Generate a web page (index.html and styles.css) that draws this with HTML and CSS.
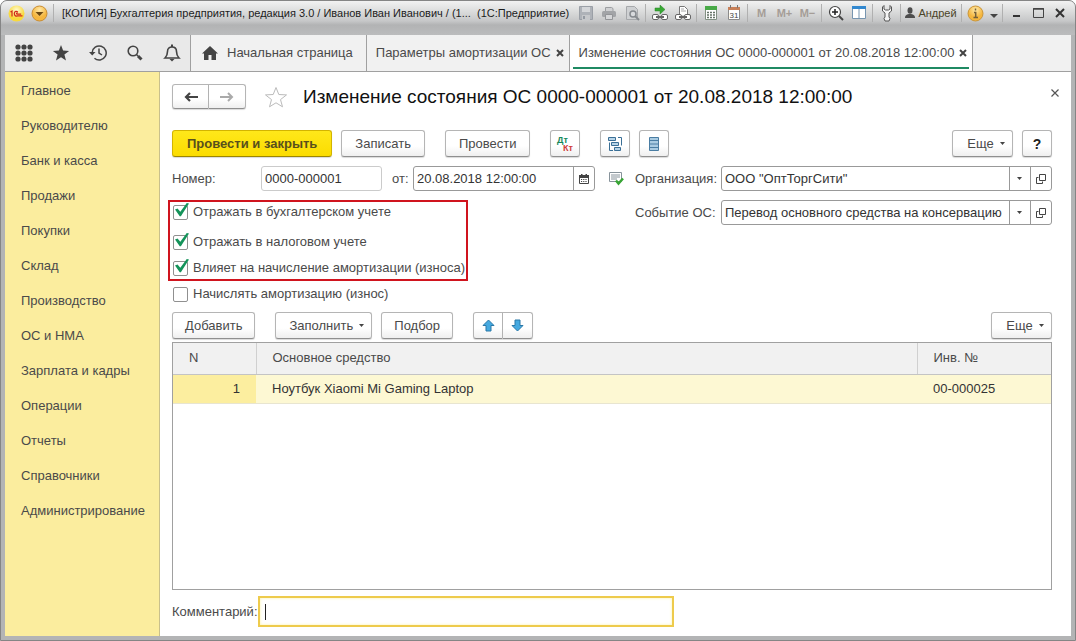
FILE: index.html
```html
<!DOCTYPE html>
<html lang="ru">
<head>
  <meta charset="UTF-8" />
  <meta name="viewport" content="width=device-width, initial-scale=1.0"/>
  <title>Изменение состояния ОС</title>
  <link rel="stylesheet" href="styles.css">
</head>
<body>
<div class="window">

  <!-- Title bar -->
  <header class="titlebar">
    <button class="tool" aria-label="Меню программы">
      <svg width="17" height="17" viewBox="0 0 17 17"><defs><radialGradient id="gold" cx="50%" cy="30%"><stop offset="0" stop-color="#fffbd0"/><stop offset="1" stop-color="#f8d93c"/></radialGradient><radialGradient id="amber" cx="50%" cy="25%"><stop offset="0" stop-color="#ffe9a8"/><stop offset="1" stop-color="#f5b63e"/></radialGradient></defs><circle cx="8.500" cy="8.500" r="8" fill="url(#gold)"/><path d="M2.500 7l1.500-1v5.500M9.800 7.200C9 5.800 6.300 6 6.300 8.600s1.900 2.700 3.200 2.300H14.500M9.500 8.300c-1-.6-1.500.8-.3.900h4" fill="none" stroke="#d22819" stroke-width="1.200"/></svg>
    </button>
    <button class="tool" aria-label="Главное меню">
      <svg width="17" height="17" viewBox="0 0 17 17"><circle cx="8.500" cy="8.500" r="7.500" fill="url(#amber)" stroke="#c98d35"/><path d="M4.500 7h8l-4 4z" fill="#6b4712"/></svg>
    </button>
    <span class="sep"></span>
    <span class="caption">[КОПИЯ] Бухгалтерия предприятия, редакция 3.0 / Иванов Иван Иванович / (1...&nbsp; (1С:Предприятие)</span>

    <button class="tool" aria-label="Сохранить">
      <svg width="16" height="16" viewBox="0 0 16 16"><path d="M1.500 1.500h13v13h-13z" fill="#aeb2b8" stroke="#9a9fa6"/><path d="M4 2h8v5H4z" fill="#d4d6d9"/><path d="M4 10h8v5H4z" fill="#c6c8cb"/><path d="M5 11h2v3H5z" fill="#949aa2"/></svg>
    </button>
    <button class="tool" aria-label="Печать">
      <svg width="16" height="16" viewBox="0 0 16 16"><path d="M4.500 6V2.500h6l1.500 1V6" fill="#d0d1d3" stroke="#9c9ea1"/><rect x="1" y="6" width="14" height="6" rx="1.500" fill="#a2a4a7"/><path d="M4.500 9.500h7v5h-7z" fill="#d5d6d8" stroke="#929497"/></svg>
    </button>
    <button class="tool" aria-label="Предварительный просмотр">
      <svg width="16" height="16" viewBox="0 0 16 16"><path d="M2.500 1.500h8l3 3v10h-11z" fill="#cfd1d3" stroke="#a6a8ab"/><circle cx="9" cy="9" r="3" fill="#d8dadd" stroke="#85898e" stroke-width="1.500"/><path d="M11 11l4 4" stroke="#85898e" stroke-width="2"/></svg>
    </button>
    <span class="sep"></span>
    <button class="tool" aria-label="Перейти по ссылке">
      <svg width="16" height="16" viewBox="0 0 16 16"><path d="M3 3h5V0l5 4.500L8 9V6H3z" fill="#39a935" stroke="#278426" stroke-width=".5"/><g fill="#fff" stroke="#666"><rect x=".5" y="9.500" width="6" height="5" rx="1.500"/><rect x="9.500" y="9.500" width="6" height="5" rx="1.500"/></g><path d="M4 12h8" stroke="#666" stroke-width="2"/></svg>
    </button>
    <button class="tool" aria-label="Получить ссылку">
      <svg width="16" height="16" viewBox="0 0 16 16"><path d="M4.500 10V1.500h5l3 3V10" fill="#fff" stroke="#777"/><path d="M6 4h3M6 6h5" stroke="#aaa"/><g fill="#fff" stroke="#666"><rect x=".5" y="9.500" width="6" height="5" rx="1.500"/><rect x="9.500" y="9.500" width="6" height="5" rx="1.500"/></g><path d="M4 12h8" stroke="#666" stroke-width="2"/></svg>
    </button>
    <span class="sep"></span>
    <button class="tool" aria-label="Калькулятор">
      <svg width="16" height="16" viewBox="0 0 16 16"><path d="M2.500 1.500h11v13h-11z" fill="#fff" stroke="#829183"/><path d="M2 1h12v4H2z" fill="#48a947"/><path d="M4 7.500h8M4 10h8M4 12.500h8" stroke="#667467" stroke-width="1.500" stroke-dasharray="2 1"/></svg>
    </button>
    <button class="tool" aria-label="Календарь">
      <svg width="16" height="16" viewBox="0 0 16 16"><path d="M2.500 2.500h11v12h-11z" fill="#fff" stroke="#8b8b8b"/><path d="M2 2h12v3H2z" fill="#c88059"/><path d="M4.500 0v3M11.500 0v3" stroke="#777"/><text x="8" y="13" class="day">31</text></svg>
    </button>
    <span class="sep"></span>
    <button class="tool memory">M</button>
    <button class="tool memory">M+</button>
    <button class="tool memory">M−</button>
    <span class="sep"></span>
    <button class="tool" aria-label="Масштаб">
      <svg width="16" height="16" viewBox="0 0 16 16"><circle cx="7" cy="7" r="5.500" fill="#fff" stroke="#444" stroke-width="1.200"/><path d="M4 7h6M7 4v6" stroke="#222" stroke-width="1.500"/><path d="M11 11l4 4" stroke="#444" stroke-width="2"/></svg>
    </button>
    <button class="tool" aria-label="Панели">
      <svg width="16" height="16" viewBox="0 0 16 16"><path d="M1.500 1.500h13v12h-13z" fill="#fff" stroke="#7795b0"/><path d="M1 1h14v3H1z" fill="#3288cf"/><path d="M8 4v10" stroke="#7795b0"/></svg>
    </button>
    <span class="sep"></span>
    <button class="tool" aria-label="Сервис">
      <svg width="16" height="18" viewBox="0 0 16 18"><path d="M5 1.500L3.500 3v4L6 9v4l-1 1.500L6 17h4l1-2.500-1-1.500V9l2.500-2V3L11 1.500V5L9.500 6h-3L5 5z" fill="#f4f4f4" stroke="#555"/></svg>
    </button>
    <span class="sep"></span>
    <button class="tool user">
      <svg width="10" height="12" viewBox="0 0 10 12"><ellipse cx="5" cy="3.500" rx="2.500" ry="3.200" fill="#4d4d4d"/><path d="M0 11c0-3 2-4 5-4s5 1 5 4z" fill="#4d4d4d"/></svg>
      Андрей
    </button>
    <span class="sep"></span>
    <button class="tool" aria-label="Справка">
      <svg width="17" height="17" viewBox="0 0 17 17"><circle cx="8.500" cy="8.500" r="7.500" fill="url(#amber)" stroke="#c9963b"/><path d="M8.500 3.500v2M7 7.500h1.700v4.700M6.500 12.500h4.500" stroke="#75603a" stroke-width="1.500" fill="none"/></svg>
    </button>
    <button class="tool narrow" aria-label="Ещё команды">
      <svg width="8" height="12" viewBox="0 0 8 12"><path d="M0 7h8l-4 4z" fill="#444"/></svg>
    </button>
    <span class="sep"></span>
    <button class="tool win" aria-label="Свернуть">
      <svg width="12" height="12" viewBox="0 0 12 12"><path d="M3 9h7" stroke="#333" stroke-width="2"/></svg>
    </button>
    <button class="tool win" aria-label="Развернуть">
      <svg width="12" height="12" viewBox="0 0 12 12"><path d="M1.500 1.500h10v9h-10z" fill="none" stroke="#444"/><path d="M1 2h11" stroke="#444" stroke-width="1.500"/></svg>
    </button>
    <button class="tool win" aria-label="Закрыть окно">
      <svg width="12" height="12" viewBox="0 0 12 12"><path d="M2 2l8 8M10 2l-8 8" stroke="#333" stroke-width="2"/></svg>
    </button>
  </header>

  <!-- Tools and open tabs -->
  <nav class="tabbar">
    <button class="panel-btn" aria-label="Разделы">
      <svg width="18" height="18" viewBox="0 0 18 18" fill="#444"><circle cx="3" cy="3" r="2.600"/><circle cx="9" cy="3" r="2.600"/><circle cx="15" cy="3" r="2.600"/><circle cx="3" cy="9" r="2.600"/><circle cx="9" cy="9" r="2.600"/><circle cx="15" cy="9" r="2.600"/><circle cx="3" cy="15" r="2.600"/><circle cx="9" cy="15" r="2.600"/><circle cx="15" cy="15" r="2.600"/></svg>
    </button>
    <button class="panel-btn" aria-label="Избранное">
      <svg width="18" height="18" viewBox="0 0 18 18"><path d="M9 1l2.100 5.600 6 .3-4.700 3.700 1.600 5.900L9 13.200l-5 3.300 1.600-5.900L.9 6.900l6-.3z" fill="#444"/></svg>
    </button>
    <button class="panel-btn" aria-label="История">
      <svg width="18" height="18" viewBox="0 0 18 18" fill="none" stroke="#444" stroke-width="1.500"><path d="M3.200 8.500A7 7 0 1 1 5.500 14.200"/><path d="M10 4.500V9l3 2"/><path d="M0 8h6.500L3.200 11.500z" fill="#444" stroke="none"/></svg>
    </button>
    <button class="panel-btn" aria-label="Поиск">
      <svg width="18" height="18" viewBox="0 0 18 18" fill="none" stroke="#444"><circle cx="7" cy="7" r="4.800" stroke-width="1.600"/><path d="M10.500 10.500l1.500 1.500" stroke-width="1.500"/><path d="M12 12l3.500 3.500" stroke-width="3"/></svg>
    </button>
    <button class="panel-btn" aria-label="Оповещения">
      <svg width="18" height="18" viewBox="0 0 18 18"><path d="M9 .5V3" stroke="#444" stroke-width="2"/><path d="M2 14c2-2 2.500-3 2.500-6.500C4.500 4.500 6.500 3 9 3s4.500 1.500 4.500 4.500C13.500 11 14 12 16 14z" fill="none" stroke="#444" stroke-width="1.600"/><path d="M6.500 15h5L9 17.500z" fill="#444"/></svg>
    </button>
    <a class="tab home" href="#">
      <svg width="16" height="14" viewBox="0 0 16 14"><path d="M8 0l8 7.500h-2V14h-4.500V9h-3v5H2V7.500H0z" fill="#444"/></svg>
      Начальная страница
    </a>
    <div class="tab">
      <a href="#">Параметры амортизации ОС</a>
      <button class="tab-close" aria-label="Закрыть вкладку"><svg width="8" height="8" viewBox="0 0 8 8"><path d="M1 1l6 6M7 1L1 7" stroke="#444" stroke-width="2"/></svg></button>
    </div>
    <div class="tab active">
      <a href="#">Изменение состояния ОС 0000-000001 от 20.08.2018 12:00:00</a>
      <button class="tab-close" aria-label="Закрыть вкладку"><svg width="8" height="8" viewBox="0 0 8 8"><path d="M1 1l6 6M7 1L1 7" stroke="#444" stroke-width="2"/></svg></button>
    </div>
  </nav>

  <div class="workspace">
    <nav class="sections">
      <a href="#">Главное</a>
      <a href="#">Руководителю</a>
      <a href="#">Банк и касса</a>
      <a href="#">Продажи</a>
      <a href="#">Покупки</a>
      <a href="#">Склад</a>
      <a href="#">Производство</a>
      <a href="#">ОС и НМА</a>
      <a href="#">Зарплата и кадры</a>
      <a href="#">Операции</a>
      <a href="#">Отчеты</a>
      <a href="#">Справочники</a>
      <a href="#">Администрирование</a>
    </nav>

    <main class="document">
      <div class="heading">
        <div class="btn-pair">
          <button class="btn" aria-label="Назад"><svg width="14" height="10" viewBox="0 0 14 10"><path d="M14 5H3M6 1L2 5l4 4" fill="none" stroke="#444" stroke-width="2.200"/></svg></button>
          <button class="btn" aria-label="Вперед"><svg width="14" height="10" viewBox="0 0 14 10"><path d="M0 5h11M8 1l4 4-4 4" fill="none" stroke="#aaa" stroke-width="2"/></svg></button>
        </div>
        <button class="plain" aria-label="В избранное"><svg width="24" height="22" viewBox="0 0 24 22"><path d="M12 1.500l2.800 7 7.700.4-6 4.700 2 7.200-6.500-4-6.500 4 2-7.200-6-4.700 7.700-.4z" fill="#fff" stroke="#bbb"/></svg></button>
        <h1>Изменение состояния ОС 0000-000001 от 20.08.2018 12:00:00</h1>
        <button class="plain close" aria-label="Закрыть"><svg width="8" height="8" viewBox="0 0 8 8"><path d="M.5.5l7 7M7.500.5l-7 7" stroke="#555" stroke-width="1.200"/></svg></button>
      </div>

      <div class="commands">
        <button class="btn primary">Провести и закрыть</button>
        <button class="btn">Записать</button>
        <button class="btn group">Провести</button>
        <button class="btn icon group" aria-label="Дебет и кредит"><svg width="18" height="18" viewBox="0 0 18 18" class="dtkt"><text x="1" y="8" fill="#16885b">Дт</text><text x="7" y="16" fill="#cf3b3b">Кт</text></svg></button>
        <button class="btn icon group" aria-label="Структура подчиненности"><svg width="16" height="16" viewBox="0 0 16 16" fill="#b7d4e8" stroke="#3a6f96"><path d="M1.500 1.500h7v3h-7zM4.500 6.500h7v3h-7zM7.500 11.500h6v3h-6z"/><path d="M11 1.500h3.500v8M2.500 6.500v8H6" fill="none"/></svg></button>
        <button class="btn icon" aria-label="Реестр"><svg width="12" height="16" viewBox="0 0 12 16"><path d="M1.500 1.500h9v13h-9z" fill="#a9cbe2" stroke="#4a7da3"/><path d="M1 4.500h10M1 8h10M1 11.500h10" stroke="#4a7da3"/></svg></button>
        <button class="btn more">Еще <svg width="5" height="3" viewBox="0 0 5 3"><path d="M0 0h5L2.500 3z" fill="#444"/></svg></button>
        <button class="btn icon help">?</button>
      </div>

      <div class="form">
        <div class="form-left">
          <div class="field">
            <label class="number-label" for="number">Номер:</label>
            <input class="text number" id="number" type="text" value="0000-000001">
            <label class="date-label" for="date">от:</label>
            <div class="combo date">
              <input id="date" type="text" value="20.08.2018 12:00:00">
              <button aria-label="Выбрать дату"><svg width="10" height="10" viewBox="0 0 10 10"><path d="M.5 2h9v7.500h-9z" fill="#fff" stroke="#444"/><path d="M0 1h10v3H0zM2 0h1.500v1H2zM6.500 0H8v1H6.500z" fill="#444"/><path d="M2 5.500h6M2 7.500h6" stroke="#444" stroke-dasharray="1.200 1"/></svg></button>
            </div>
            <svg class="posted" width="16" height="15" viewBox="0 0 16 15"><path d="M1.500 1.500h12v9h-12z" fill="#fff" stroke="#87939b"/><path d="M3 4h9M3 6h9M3 8h6" stroke="#87939b"/><path d="M8 9.500l2.500 3L15 7.500" fill="none" stroke="#38a535" stroke-width="2.500"/></svg>
          </div>
          <div class="checks">
            <label class="check first"><input type="checkbox" checked>Отражать в бухгалтерском учете</label>
            <label class="check"><input type="checkbox" checked>Отражать в налоговом учете</label>
            <label class="check"><input type="checkbox" checked>Влияет на начисление амортизации (износа)</label>
          </div>
          <label class="check"><input type="checkbox">Начислять амортизацию (износ)</label>
        </div>
        <div class="form-right">
          <div class="field">
            <label class="ref-label" for="org">Организация:</label>
            <div class="combo">
              <select id="org"><option>ООО "ОптТоргСити"</option></select>
              <button aria-label="Открыть"><svg width="10" height="10" viewBox="0 0 10 10" fill="none" stroke="#444"><path d="M3.500.5h6v6h-6z"/><path d="M2.500 3.500h-2v6h6v-2"/></svg></button>
            </div>
          </div>
          <div class="field">
            <label class="ref-label" for="event">Событие ОС:</label>
            <div class="combo">
              <select id="event"><option>Перевод основного средства на консервацию</option></select>
              <button aria-label="Открыть"><svg width="10" height="10" viewBox="0 0 10 10" fill="none" stroke="#444"><path d="M3.500.5h6v6h-6z"/><path d="M2.500 3.500h-2v6h6v-2"/></svg></button>
            </div>
          </div>
        </div>
      </div>

      <div class="commands list-commands">
        <button class="btn">Добавить</button>
        <button class="btn group fill">Заполнить <svg width="5" height="3" viewBox="0 0 5 3"><path d="M0 0h5L2.500 3z" fill="#444"/></svg></button>
        <button class="btn">Подбор</button>
        <div class="btn-pair group">
          <button class="btn" aria-label="Вверх"><svg width="13" height="13" viewBox="0 0 13 13"><path d="M6.500 1l5.500 5.500H9V12H4V6.500H1z" fill="#45a9e0" stroke="#2a78a8"/></svg></button>
          <button class="btn" aria-label="Вниз"><svg width="13" height="13" viewBox="0 0 13 13"><path d="M6.500 12L1 6.500h3V1h5v5.500h3z" fill="#45a9e0" stroke="#2a78a8"/></svg></button>
        </div>
        <button class="btn more">Еще <svg width="5" height="3" viewBox="0 0 5 3"><path d="M0 0h5L2.500 3z" fill="#444"/></svg></button>
      </div>

      <div class="grid">
        <table>
          <thead>
            <tr><th class="col-n">N</th><th>Основное средство</th><th class="col-inv">Инв. №</th></tr>
          </thead>
          <tbody>
            <tr><td class="col-n current">1</td><td>Ноутбук Xiaomi Mi Gaming Laptop</td><td>00-000025</td></tr>
          </tbody>
        </table>
      </div>

      <div class="comment">
        <label for="comment">Комментарий:</label>
        <input id="comment" type="text">
      </div>
    </main>
  </div>
</div>
</body>
</html>
```
FILE: styles.css
```css
:root {
  --text: #4a4a4a;
  --line: #a0a0a0;
  --yellow: #fbed9e;
  --green: #1f8a63;
}

* {
  box-sizing: border-box;
}

body {
  margin: 0;
  font-family: "Liberation Sans", Arial, sans-serif;
  font-size: 13px;
  line-height: 16px;
  color: var(--text);
  background: #fff;
}

button,
input,
select {
  font: inherit;
  color: inherit;
  margin: 0;
}

button {
  cursor: pointer;
}

svg {
  flex: none;
  display: block;
}

a {
  color: inherit;
  text-decoration: none;
}

.window {
  min-height: 100vh;
  display: flex;
  flex-direction: column;
  padding: 0 4px 4px;
  background: #b3b4b5;
  border: 1px solid #858585;
  border-radius: 7px 7px 0 0;
}

/* Title bar */
.titlebar {
  display: flex;
  align-items: flex-start;
  height: 34px;
  margin: 0 -4px;
  padding: 0 4px;
  background: linear-gradient(#f2f2f2, #dcdddd 10px, #c6c7c8 20px, #b2b3b4 24px, #bbbcbd);
  border-radius: 6px 6px 0 0;
  font-size: 11px;
  color: #1c1c1c;
}

.tool {
  flex: none;
  width: 23px;
  height: 24px;
  padding: 0;
  border: none;
  background: none;
  display: flex;
  align-items: center;
  justify-content: center;
}

.tool.memory {
  font-weight: bold;
  color: #a59d97;
}

.tool.user {
  width: 56px;
  gap: 3px;
  color: #4b4428;
}

.tool.narrow {
  width: 13px;
}

.tool.win {
  width: 22px;
}

.day {
  font-size: 8px;
  text-anchor: middle;
  fill: #444;
}

.sep {
  flex: none;
  width: 1px;
  height: 18px;
  margin: 3px 2px;
  background: #b0b0b0;
}

.caption {
  flex: 1;
  min-width: 0;
  padding-left: 6px;
  line-height: 24px;
  white-space: nowrap;
  overflow: hidden;
}

/* Tabs */
.tabbar {
  display: flex;
  height: 37px;
  background: #f1f1f1;
  border-bottom: 1px solid var(--line);
}

.panel-btn {
  width: 37px;
  padding: 0;
  border: none;
  background: #e9e9e9;
  display: flex;
  align-items: center;
  justify-content: center;
}

.tab {
  display: flex;
  align-items: center;
  gap: 5px;
  padding: 0 5px 0 9px;
  border-right: 1px solid var(--line);
  white-space: nowrap;
}

.tab.home {
  gap: 9px;
  padding: 0 13px 0 11px;
  border-left: 1px solid var(--line);
}

.tab.active {
  background: linear-gradient(var(--green), var(--green)) center bottom 2px / calc(100% - 6px) 2px no-repeat #fff;
}

.tab-close {
  padding: 0;
  border: none;
  background: none;
}

/* Sections panel */
.workspace {
  flex: 1;
  display: flex;
  background: #fff;
}

.sections {
  flex: none;
  width: 155px;
  padding-top: 1px;
  background: var(--yellow);
  border-right: 1px solid #c9c08c;
}

.sections a {
  display: block;
  padding-left: 16px;
  line-height: 35px;
}

/* Document */
.document {
  flex: 1;
  min-width: 0;
  display: flex;
  flex-direction: column;
  padding: 12px 19px 9px 12px;
}

.heading {
  display: flex;
  align-items: center;
  height: 25px;
}

.heading h1 {
  margin: 0 auto 0 15px;
  font-size: 19px;
  line-height: 24px;
  font-weight: normal;
  color: #111;
  white-space: nowrap;
}

.plain {
  padding: 0;
  border: none;
  background: none;
}

.heading .plain {
  margin-left: 18px;
}

.heading .close {
  align-self: flex-start;
  margin: 5px -7px 0 0;
}

.btn {
  display: flex;
  align-items: center;
  justify-content: center;
  height: 27px;
  padding: 0 13px;
  border: 1px solid #b5b5b5;
  border-bottom-color: #8f8f8f;
  border-radius: 3px;
  background: linear-gradient(#fff 60%, #efefef);
  box-shadow: 0 1px 1px rgba(0, 0, 0, 0.15);
  white-space: nowrap;
}

.btn.primary {
  padding: 0 14px;
  font-weight: bold;
  color: #584f1c;
  background: linear-gradient(#ffe81a, #fbdc00);
  border-color: #d3b400;
  border-bottom-color: #9c8600;
}

.btn.icon {
  width: 30px;
  padding: 0;
}

.list-commands .btn {
  padding: 0 12px;
}

.btn.more,
.btn.fill {
  gap: 6px;
}

.list-commands .fill {
  padding: 0 7px 0 13px;
}

.commands .more {
  width: 61px;
  padding: 0 0 0 7px;
  margin-left: auto;
}

.btn.help {
  font-size: 14px;
  font-weight: bold;
  color: #222;
}

.btn-pair {
  display: flex;
}

.btn-pair .btn {
  width: 30px;
  padding: 0;
}

.btn-pair .btn:first-child {
  border-radius: 3px 0 0 3px;
}

.btn-pair .btn:last-child {
  border-left: none;
  border-radius: 0 3px 3px 0;
}

.heading .btn {
  width: 37px;
  height: 25px;
}

.commands {
  display: flex;
  gap: 9px;
  margin-top: 21px;
}

.commands .group {
  margin-left: 11px;
}

.dtkt {
  font-size: 9px;
  font-weight: bold;
}

/* Form fields */
.form {
  display: flex;
  gap: 11px;
  margin-top: 9px;
}

.form-right {
  flex: 1;
  min-width: 0;
  display: flex;
  flex-direction: column;
  gap: 9px;
}

.field {
  display: flex;
  align-items: center;
  height: 25px;
}

.number-label {
  width: 89px;
}

.date-label {
  width: 31px;
  padding-left: 10px;
}

.ref-label {
  width: 86px;
}

.text {
  height: 25px;
  padding: 0 3px;
  border: 1px solid #cbcbcb;
  border-radius: 3px;
  color: #333;
}

.number {
  width: 121px;
}

.combo {
  flex: 1;
  min-width: 0;
  display: flex;
  height: 25px;
  border: 1px solid #999;
  border-radius: 3px;
  background: #fff;
  overflow: hidden;
  color: #333;
}

.combo.date {
  flex: none;
  width: 182px;
}

.combo input,
.combo select {
  flex: 1;
  min-width: 0;
  padding: 0 3px;
  border: none;
  outline: none;
  background: none;
}

.combo select {
  appearance: none;
  background: url("data:image/svg+xml,%3Csvg xmlns='http://www.w3.org/2000/svg' width='21' height='23'%3E%3Cpath d='M.5 0v23' stroke='%23999'/%3E%3Cpath d='M8 10h5l-2.500 3z' fill='%23444'/%3E%3C/svg%3E") right center no-repeat;
}

.combo button {
  flex: none;
  width: 21px;
  padding: 0;
  border: none;
  border-left: 1px solid #999;
  background: none;
  display: flex;
  align-items: center;
  justify-content: center;
}

.posted {
  margin-left: 13px;
}

.checks {
  display: flex;
  flex-direction: column;
  gap: 6px;
  width: 300px;
  height: 81px;
  margin: 9px 0 3px -4px;
  padding-left: 2px;
  border: 2px solid #d0141e;
}

.check {
  display: flex;
  align-items: center;
  gap: 5px;
  height: 20px;
  padding-left: 1px;
  white-space: nowrap;
}

.check.first {
  margin-bottom: 4px;
}

.check input {
  appearance: none;
  position: relative;
  flex: none;
  width: 15px;
  height: 15px;
  border: 1px solid #909090;
  border-radius: 2px;
  background: #fff;
}

.check input:checked::before {
  content: "";
  position: absolute;
  left: 1px;
  top: -3px;
  width: 14px;
  height: 14px;
  background: #14935a;
  clip-path: polygon(0 50%, 18% 42%, 38% 66%, 84% 4%, 100% 8%, 42% 98%, 34% 98%);
}

/* Table of assets */
.list-commands {
  margin-top: 8px;
}

.grid {
  flex: 1;
  margin-top: 3px;
  border: 1px solid var(--line);
}

.grid table {
  width: 100%;
  border-collapse: collapse;
  table-layout: fixed;
}

.grid th,
.grid td {
  padding: 0 16px;
  text-align: left;
  font-weight: normal;
}

.grid th {
  height: 31px;
  background: #f1f1f1;
  border-right: 1px solid #d0d0d0;
  border-bottom: 1px solid #c4c4c4;
}

.grid th:last-child {
  border-right: none;
}

.grid td {
  height: 29px;
  background: #fdf8d3;
  border-bottom: 1px solid #e8e5d0;
  color: #333;
}

.grid .col-n {
  width: 83px;
}

.grid .col-inv {
  width: 134px;
}

.grid .current {
  text-align: right;
  background: #fcee9f;
}

/* Comment line */
.comment {
  display: flex;
  align-items: center;
  margin-top: 6px;
}

.comment label {
  width: 86px;
}

.comment input {
  width: 416px;
  max-width: 100%;
  height: 31px;
  padding: 0 6px;
  border: 2px solid #eecb4c;
  outline: none;
  background: linear-gradient(#222, #222) 5px center / 1px 16px no-repeat #fff;
  box-shadow: inset 0 0 3px #fbf3a5;
}
```
